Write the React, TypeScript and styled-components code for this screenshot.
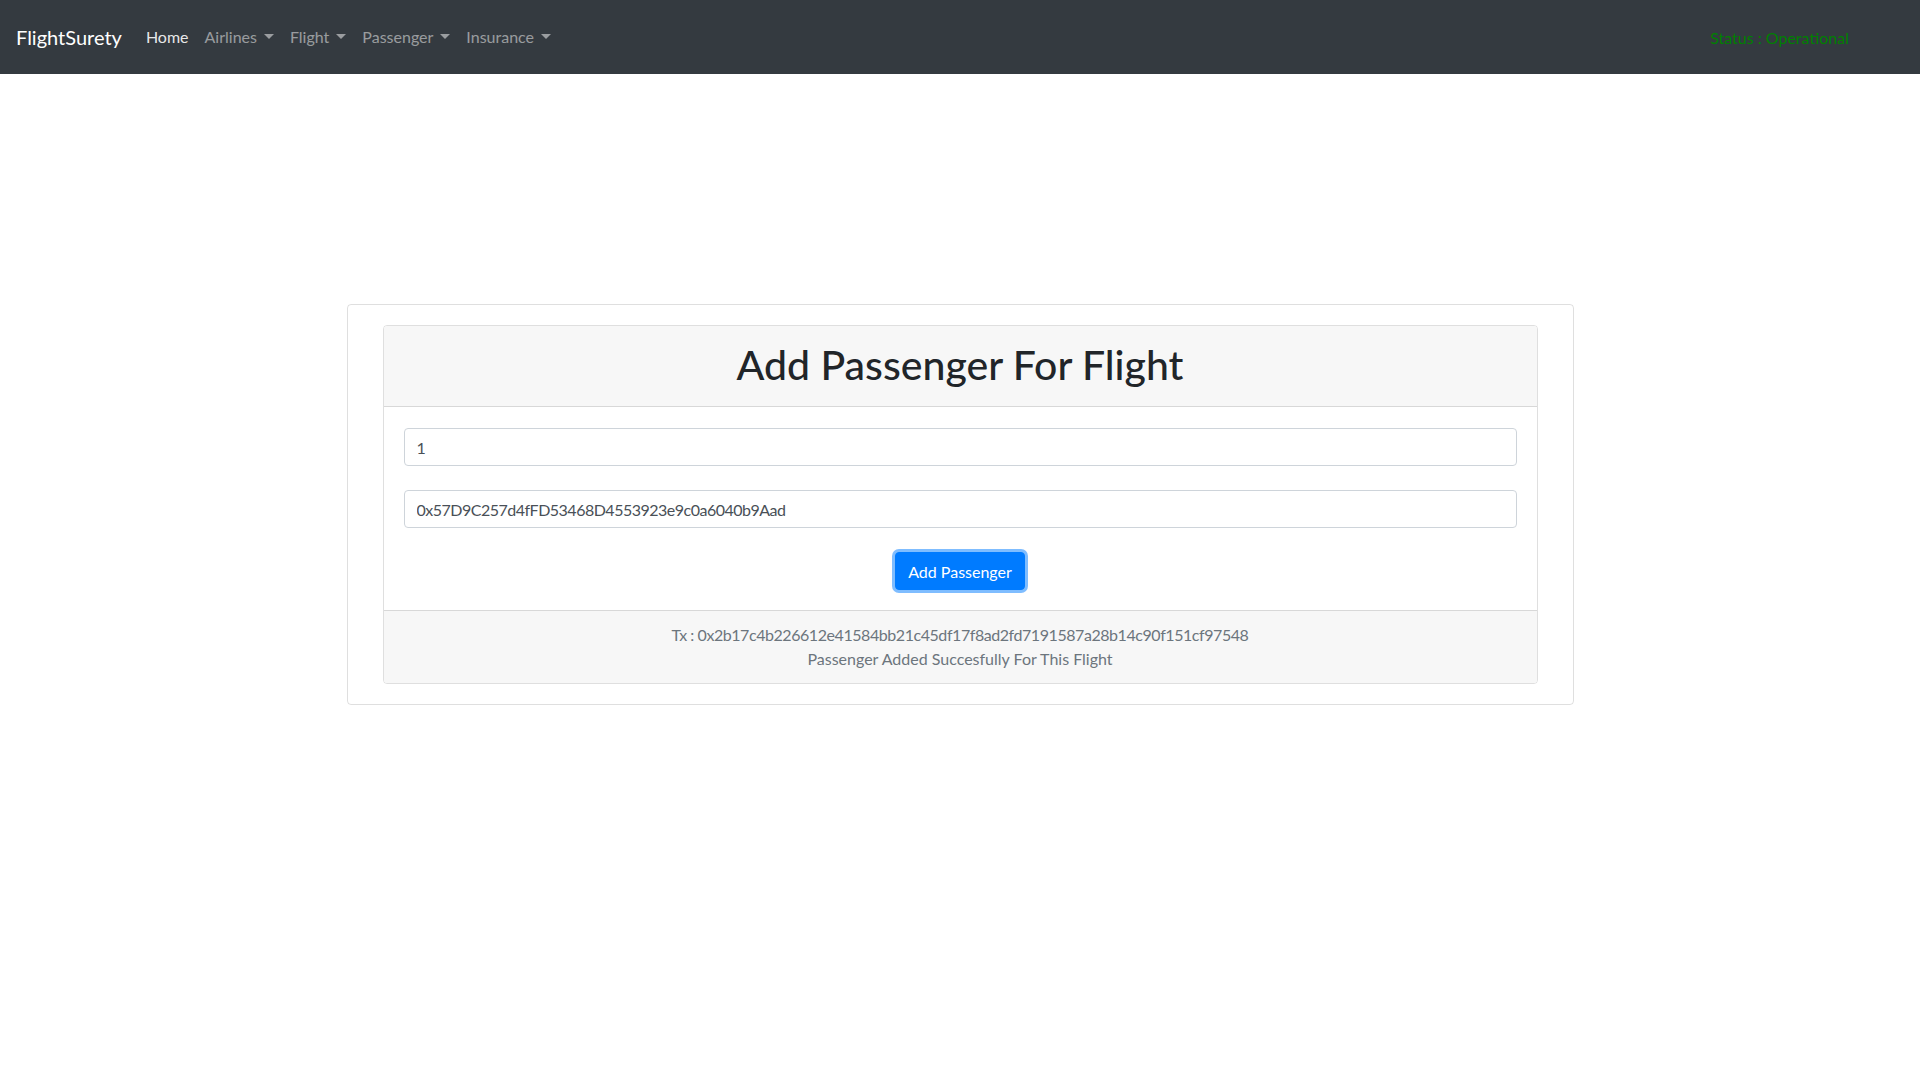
import React from 'react';
import styled, { createGlobalStyle } from 'styled-components';

const GlobalStyle = createGlobalStyle`
  * { box-sizing: border-box; }
  body {
    margin: 0;
    background: #fff;
    font-family: Lato, "Noto Sans", "Liberation Sans", sans-serif;
    font-size: 16px;
    line-height: 1.5;
    color: #212529;
  }
`;

const menus = ['Airlines', 'Flight', 'Passenger', 'Insurance'];

export default function App() {
  return (
    <>
      <GlobalStyle />
      <Navbar>
        <Brand>FlightSurety</Brand>
        <Nav>
          <NavLink active>Home</NavLink>
          {menus.map((m) => (
            <NavLink key={m}>
              {m}
              <Caret />
            </NavLink>
          ))}
        </Nav>
        <Status>Status : Operational</Status>
      </Navbar>
      <Main>
        <OuterCard>
          <Card>
            <CardHeader>
              <Title>Add Passenger For Flight</Title>
            </CardHeader>
            <CardBody>
              <Input defaultValue="1" />
              <Input hex defaultValue="0x57D9C257d4fFD53468D4553923e9c0a6040b9Aad" />
              <Button>Add Passenger</Button>
            </CardBody>
            <CardFooter>
              <Hex>Tx : 0x2b17c4b226612e41584bb21c45df17f8ad2fd7191587a28b14c90f151cf97548</Hex>
              <div>Passenger Added Succesfully For This Flight</div>
            </CardFooter>
          </Card>
        </OuterCard>
      </Main>
    </>
  );
}

const Navbar = styled.nav`
  display: flex;
  align-items: center;
  height: 74px;
  padding: 0 71px 0 16px;
  background: #343a40;
`;

const Brand = styled.a`
  font-size: 20px;
  color: #fff;
  margin-right: 16px;
  line-height: 30px;
`;

const Nav = styled.div`
  display: flex;
  align-items: center;
  flex: 1;
`;

const NavLink = styled.a<{ active?: boolean }>`
  display: flex;
  align-items: center;
  padding: 8px;
  color: ${(p) => (p.active ? 'rgba(255,255,255,0.9)' : 'rgba(255,255,255,0.5)')};
  cursor: pointer;
`;

const Caret = styled.span`
  display: inline-block;
  margin-left: 7px;
  margin-top: -2px;
  width: 0;
  height: 0;
  border-top: 5px solid rgba(255, 255, 255, 0.5);
  border-left: 5px solid transparent;
  border-right: 5px solid transparent;
`;

const Status = styled.span`
  color: green;
  font-size: 16px;
  margin-top: 2px;
`;

const Main = styled.main`
  padding-top: 230px;
`;

const OuterCard = styled.section`
  width: 1227px;
  margin: 0 auto;
  padding: 20px 35px;
  border: 1px solid rgba(0, 0, 0, 0.125);
  border-radius: 4px;
`;

const Card = styled.div`
  border: 1px solid rgba(0, 0, 0, 0.125);
  border-radius: 4px;
  overflow: hidden;
`;

const CardHeader = styled.div`
  background: #f7f7f7;
  border-bottom: 1px solid rgba(0, 0, 0, 0.125);
  padding: 15px 20px 9px;
  text-align: center;
`;

const Title = styled.h1`
  margin: 0 0 8px;
  font-size: 41px;
  font-weight: 500;
  line-height: 48px;
  color: #212529;
`;

const CardBody = styled.div`
  display: flex;
  flex-direction: column;
  align-items: center;
  gap: 24px;
  padding: 21px 20px 20px;
`;

const Input = styled.input<{ hex?: boolean }>`
  width: 100%;
  height: 38px;
  padding: 6px 12px;
  border: 1px solid #ced4da;
  border-radius: 4px;
  font-family: inherit;
  font-size: 16px;
  letter-spacing: ${(p) => (p.hex ? '-0.5px' : 'normal')};
  color: #495057;
  background: #fff;
  outline: none;
`;

const Button = styled.button`
  height: 38px;
  padding: 6px 12px;
  border: 1px solid #007bff;
  border-radius: 4px;
  background: #007bff;
  color: #fff;
  font-family: inherit;
  font-size: 16px;
  box-shadow: 0 0 0 3px rgba(0, 123, 255, 0.5);
  cursor: pointer;
`;

const CardFooter = styled.div`
  background: #f7f7f7;
  border-top: 1px solid rgba(0, 0, 0, 0.125);
  padding: 12px 20px;
  text-align: center;
  color: #6c757d;
`;

const Hex = styled.div`
  letter-spacing: -0.44px;
`;
